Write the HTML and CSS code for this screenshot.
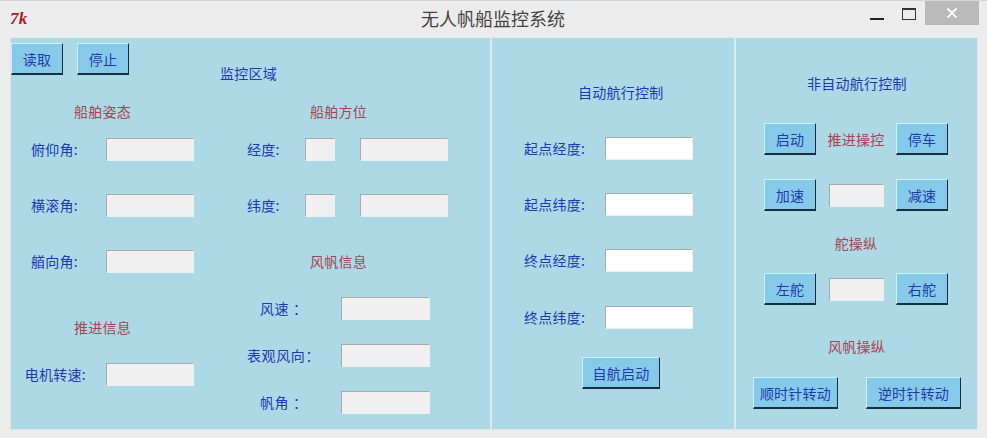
FILE: index.html
```html
<!DOCTYPE html>
<html lang="zh-CN">
<head>
  <meta charset="UTF-8">
  <title>无人帆船监控系统</title>
  <link rel="stylesheet" href="styles.css">
</head>
<body>
  <header class="titlebar">
    <span class="logo">7k</span>
    <h1 class="title">无人帆船监控系统</h1>
    <div class="controls">
      <span class="min"></span>
      <span class="max"></span>
      <span class="close">
        <svg width="12" height="10" viewBox="0 0 12 10"><path d="M1.5 0.5 L10.5 9.5 M10.5 0.5 L1.5 9.5" stroke="#fff" stroke-width="2" fill="none"/></svg>
      </span>
    </div>
  </header>

  <main class="panels">
    <section class="panel monitor">
      <div class="col col-a">
        <div class="toolbar">
          <button class="btn">读取</button>
          <button class="btn">停止</button>
        </div>
        <h2 class="head red attitude">船舶姿态</h2>
        <div class="group first">
          <div class="row"><label class="lbl">俯仰角:</label><input class="field wide" disabled></div>
          <div class="row"><label class="lbl">横滚角:</label><input class="field wide" disabled></div>
          <div class="row"><label class="lbl">艏向角:</label><input class="field wide" disabled></div>
        </div>
        <h2 class="head red thrust">推进信息</h2>
        <div class="row motor"><label class="lbl">电机转速:</label><input class="field wide" disabled></div>
      </div>

      <div class="col col-b">
        <h2 class="head blue area">监控区域</h2>
        <h2 class="head red bearing">船舶方位</h2>
        <div class="group first">
          <div class="row pos"><label class="lbl">经度:</label><input class="field tiny" disabled><input class="field wide" disabled></div>
          <div class="row pos"><label class="lbl">纬度:</label><input class="field tiny" disabled><input class="field wide" disabled></div>
        </div>
        <h2 class="head red bearing sail">风帆信息</h2>
        <div class="group winds">
          <div class="row wind"><label class="lbl indent">风速 ：</label><input class="field wind-field" disabled></div>
          <div class="row wind"><label class="lbl">表观风向：</label><input class="field wind-field" disabled></div>
          <div class="row wind"><label class="lbl indent">帆角 ：</label><input class="field wind-field" disabled></div>
        </div>
      </div>
    </section>

    <section class="panel auto">
      <h2 class="head blue auto-head">自动航行控制</h2>
      <div class="group auto-rows">
        <div class="row"><label class="lbl">起点经度:</label><input class="field white"></div>
        <div class="row"><label class="lbl">起点纬度:</label><input class="field white"></div>
        <div class="row"><label class="lbl">终点经度:</label><input class="field white"></div>
        <div class="row"><label class="lbl">终点纬度:</label><input class="field white"></div>
      </div>
      <button class="btn start">自航启动</button>
    </section>

    <section class="panel manual">
      <h2 class="head blue manual-head">非自动航行控制</h2>
      <div class="ctl first-ctl">
        <button class="btn">启动</button>
        <span class="head red">推进操控</span>
        <button class="btn">停车</button>
      </div>
      <div class="ctl second-ctl">
        <button class="btn">加速</button>
        <input class="field short" disabled>
        <button class="btn">减速</button>
      </div>
      <h2 class="head red center rudder">舵操纵</h2>
      <div class="ctl third-ctl">
        <button class="btn">左舵</button>
        <input class="field short" disabled>
        <button class="btn">右舵</button>
      </div>
      <h2 class="head red center sail-head">风帆操纵</h2>
      <div class="turns">
        <button class="btn turn">顺时针转动</button>
        <button class="btn turn">逆时针转动</button>
      </div>
    </section>
  </main>
</body>
</html>
```

FILE: styles.css
```css
* {
  box-sizing: border-box;
}

body {
  margin: 0;
  height: 438px;
  overflow: hidden;
  background-color: #ececec;
  font-family: "Noto Sans CJK SC", "Liberation Sans", sans-serif;
  font-size: 14px;
  letter-spacing: 0.25px;
  color: #1c3ab0;
}

/* title bar */
.titlebar {
  display: flex;
  align-items: flex-start;
  height: 37px;
  padding-left: 10px;
  border-top: 1px solid #d4d4d4;
}

.logo {
  width: 20px;
  margin-top: 6px;
  font-family: "Liberation Serif", serif;
  font-size: 17px;
  line-height: 24px;
  font-style: italic;
  font-weight: bold;
  color: #a81e22;
}

.title {
  margin: 4px 0 0 391px;
  font-size: 18px;
  line-height: 26px;
  font-weight: normal;
  letter-spacing: 0;
  color: #444;
}

.controls {
  display: flex;
  margin-left: 305px;
}

.min {
  width: 14px;
  height: 2px;
  margin-top: 17px;
  background-color: #222;
}

.max {
  width: 14px;
  height: 12px;
  margin: 7px 0 0 18px;
  border: 1px solid #333;
  border-top-width: 2px;
}

.close {
  display: flex;
  align-items: center;
  justify-content: center;
  width: 54px;
  height: 24px;
  margin-left: 9px;
  background-color: #b9b9b9;
}

/* panels */
.panels {
  display: flex;
  height: 393px;
  margin-left: 10px;
  width: 968px;
}

.panel {
  height: 393px;
  background-color: #add8e6;
  border: 1px solid #dfe8ea;
}

.monitor {
  display: flex;
  width: 481px;
  padding-top: 5px;
}

.auto {
  width: 244px;
  padding-left: 32px;
}

.manual {
  width: 243px;
}

.col-a {
  width: 194px;
}

.col-b {
  flex: 1;
}

.toolbar {
  display: flex;
  gap: 14px;
}

/* bevelled buttons */
.btn {
  width: 52px;
  height: 32px;
  padding: 0;
  background-color: #87c9e8;
  border: 1px solid;
  border-color: #c4f4fb #13303c #13303c #c4f4fb;
  border-bottom-width: 2px;
  font: inherit;
  letter-spacing: inherit;
  color: #1c3ab0;
}

/* headings */
.head {
  display: block;
  margin: 0;
  height: 24px;
  font-size: 14px;
  line-height: 24px;
  font-weight: normal;
  white-space: nowrap;
}

.red {
  color: #a5464f;
}

.blue {
  color: #1c3ab0;
}

.attitude {
  margin: 24px 0 0 63px;
}

.thrust {
  margin: 42px 0 0 63px;
}

.area {
  margin: 18px 0 0 15px;
}

.bearing {
  margin: 14px 0 0 105px;
}

.bearing.sail {
  margin-top: 32px;
}

/* label + field rows */
.group {
  display: flex;
  flex-direction: column;
  gap: 32px;
}

.group.first {
  margin-top: 14px;
}

.group.winds {
  margin-top: 23px;
  gap: 23px;
}

.row {
  display: flex;
  align-items: center;
  height: 24px;
}

.lbl {
  width: 67px;
  margin-right: 28px;
  text-align: right;
  white-space: nowrap;
}

.motor {
  margin-top: 23px;
}

.motor .lbl {
  width: 75px;
  margin-right: 20px;
}

.pos {
  padding-left: 42px;
}

.pos .lbl {
  width: 58px;
  margin-right: 0;
  text-align: left;
}

.pos .field.tiny {
  margin-right: 25px;
}

.wind {
  padding-left: 42px;
}

.wind .lbl {
  width: 67px;
  margin-right: 27px;
  text-align: left;
  letter-spacing: 0.6px;
}

.wind .lbl.indent {
  padding-left: 13px;
}

/* text fields */
.field {
  height: 23px;
  padding: 0;
  background-color: #f0f0f0;
  border: 1px solid;
  border-color: #a9a9a9 #e8f2f5 #e8f2f5 #a9a9a9;
  border-radius: 0;
}

.field.wide,
.field.white {
  width: 88px;
}

.field.wind-field {
  width: 89px;
}

.field.tiny {
  width: 30px;
}

.field.short {
  width: 55px;
}

.field.white {
  background-color: #fff;
}

/* auto panel */
.auto-head {
  margin: 42px 0 0 54px;
}

.auto-rows {
  margin-top: 32px;
  gap: 32px;
}

.auto .lbl {
  width: 60px;
  margin-right: 21px;
  text-align: left;
}

.auto-rows .row:last-child {
  margin-top: 1px;
}

.start {
  display: block;
  width: 78px;
  margin: 28px 0 0 58px;
}

/* manual panel */
.manual-head {
  margin: 33px 0 0 71px;
}

.center {
  text-align: center;
}

.ctl {
  display: flex;
  align-items: center;
  justify-content: space-between;
  width: 184px;
  margin-left: 28px;
}

.first-ctl {
  margin-top: 28px;
}

.second-ctl {
  margin-top: 24px;
}

.third-ctl {
  margin-top: 18px;
}

.rudder {
  margin-top: 20px;
  padding-right: 1px;
}

.sail-head {
  margin-top: 29px;
}

.turns {
  display: flex;
  gap: 28px;
  margin: 19px 0 0 17px;
}

.btn.turn {
  width: 85px;
}

.btn.turn:last-child {
  width: 95px;
}
```
